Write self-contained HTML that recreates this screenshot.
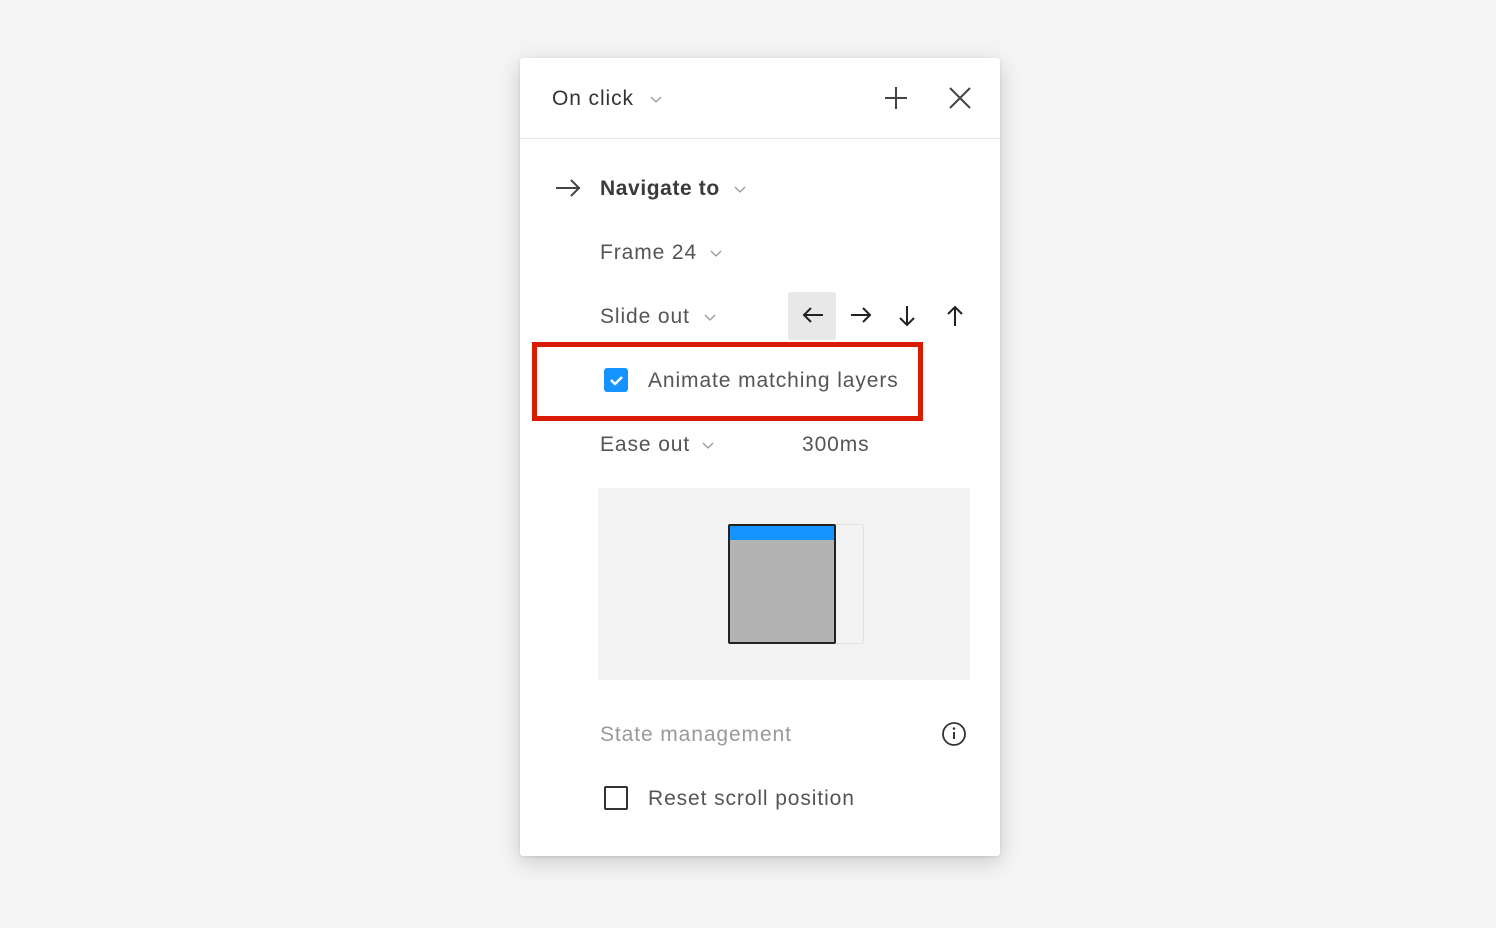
<!DOCTYPE html>
<html><head><style>
body{margin:0;width:1496px;height:928px;background:#f5f5f5;font-family:"Liberation Sans",sans-serif;position:relative;overflow:hidden}
.p{position:absolute;left:520px;top:58px;width:480px;height:798px;background:#fff;border-radius:3px;box-shadow:0 6px 24px rgba(0,0,0,.18),0 1px 3px rgba(0,0,0,.1)}
.t{position:absolute;font-size:21px;letter-spacing:0.9px;color:#333;white-space:nowrap;line-height:24px}
.g{color:#555}
svg{position:absolute;overflow:visible}
</style></head><body>
<div class="p"></div>
<div class="t" style="left:552px;top:87px;color:#333">On click</div>
<svg style="left:650px;top:95px" width="12" height="8"><path d="M1 2l5 5 5-5" fill="none" stroke="#999" stroke-width="1.3"/></svg>
<svg style="left:884px;top:86px" width="24" height="24"><path d="M12 1v22M1 12h22" stroke="#444" stroke-width="2"/></svg>
<svg style="left:949px;top:87px" width="22" height="22"><path d="M1 1l20 20M21 1L1 21" stroke="#444" stroke-width="2"/></svg>
<div style="position:absolute;left:520px;top:138px;width:480px;height:1px;background:#e6e6e6"></div>
<svg style="left:555px;top:178px" width="26" height="20"><path d="M1 10h24M16 2l8 8-8 8" fill="none" stroke="#444" stroke-width="2"/></svg>
<div class="t" style="left:600px;top:177px;font-weight:bold;color:#3a3a3a;letter-spacing:0.6px">Navigate to</div>
<svg style="left:734px;top:185px" width="12" height="8"><path d="M1 2l5 5 5-5" fill="none" stroke="#999" stroke-width="1.3"/></svg>
<div class="t g" style="left:600px;top:241px">Frame 24</div>
<svg style="left:710px;top:249px" width="12" height="8"><path d="M1 2l5 5 5-5" fill="none" stroke="#999" stroke-width="1.3"/></svg>
<div class="t g" style="left:600px;top:305px">Slide out</div>
<svg style="left:704px;top:313px" width="12" height="8"><path d="M1 2l5 5 5-5" fill="none" stroke="#999" stroke-width="1.3"/></svg>
<div style="position:absolute;left:788px;top:292px;width:48px;height:48px;background:#e8e8e8;border-radius:3px"></div>
<svg style="left:802px;top:307px" width="22" height="16"><path d="M21 8H2M9 1L2 8l7 7" fill="none" stroke="#222" stroke-width="2"/></svg>
<svg style="left:850px;top:307px" width="22" height="16"><path d="M1 8h19M13 1l7 7-7 7" fill="none" stroke="#222" stroke-width="2"/></svg>
<svg style="left:899px;top:305px" width="16" height="22"><path d="M8 1v19M1 13l7 7 7-7" fill="none" stroke="#222" stroke-width="2"/></svg>
<svg style="left:947px;top:305px" width="16" height="22"><path d="M8 21V2M1 9l7-7 7 7" fill="none" stroke="#222" stroke-width="2"/></svg>
<div style="position:absolute;left:532px;top:342px;width:381px;height:69px;border:5px solid #d91b00"></div>
<div style="position:absolute;left:604px;top:368px;width:24px;height:24px;background:#1593ff;border-radius:3px"></div>
<svg style="left:604px;top:368px" width="24" height="24"><path d="M7 12l4 4 7-7" fill="none" stroke="#fff" stroke-width="2.5"/></svg>
<div class="t g" style="left:648px;top:369px">Animate matching layers</div>
<div class="t g" style="left:600px;top:433px">Ease out</div>
<svg style="left:702px;top:441px" width="12" height="8"><path d="M1 2l5 5 5-5" fill="none" stroke="#999" stroke-width="1.3"/></svg>
<div class="t g" style="left:802px;top:433px">300ms</div>
<div style="position:absolute;left:598px;top:488px;width:372px;height:192px;background:#f3f3f3;border-radius:2px"></div>
<div style="position:absolute;left:830px;top:524px;width:32px;height:118px;border:1px solid #e2e2e2;border-radius:2px"></div>
<div style="position:absolute;left:728px;top:524px;width:104px;height:116px;background:#b3b3b3;border:2px solid #222;border-radius:2px;overflow:hidden"><div style="height:14px;background:#1593ff"></div></div>
<div class="t" style="left:600px;top:723px;color:#999">State management</div>
<svg style="left:942px;top:722px" width="24" height="24"><circle cx="12" cy="12" r="11" fill="none" stroke="#333" stroke-width="1.8"/><path d="M12 10v7" stroke="#333" stroke-width="2"/><circle cx="12" cy="6.5" r="1.3" fill="#333"/></svg>
<div style="position:absolute;left:604px;top:786px;width:20px;height:20px;border:2px solid #333;border-radius:2px"></div>
<div class="t g" style="left:648px;top:787px">Reset scroll position</div>
</body></html>
